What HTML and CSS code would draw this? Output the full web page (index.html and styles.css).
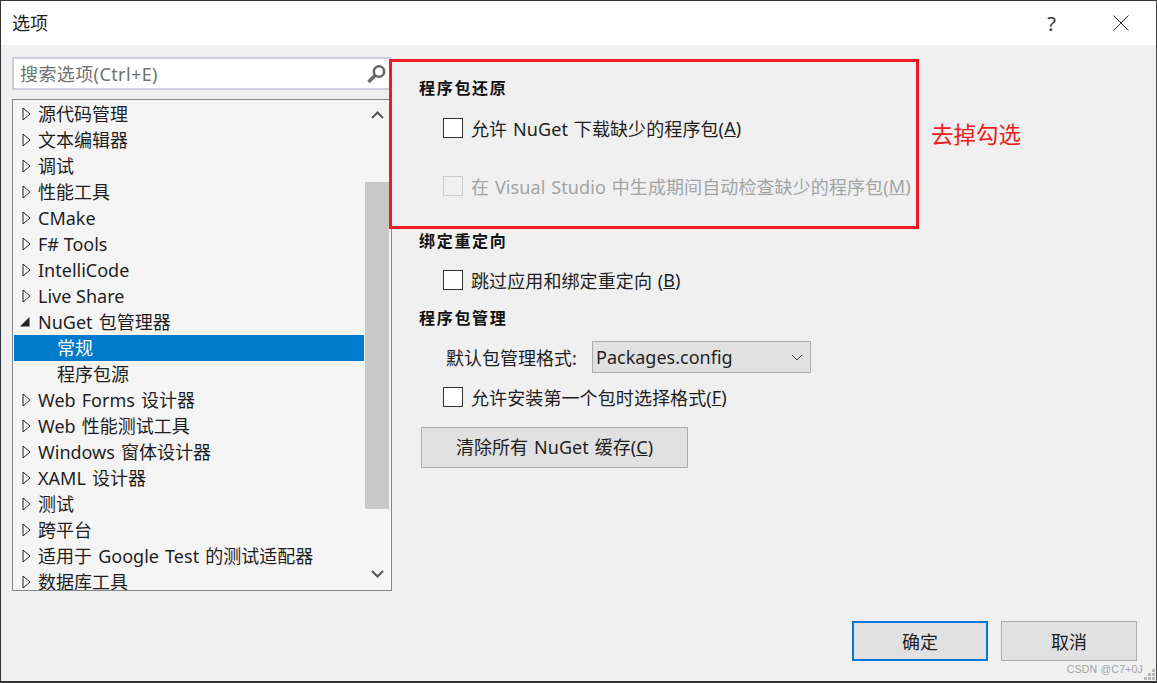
FILE: index.html
```html
<!DOCTYPE html>
<html lang="zh-CN">

<head>
    <meta charset="UTF-8">
    <meta name="viewport" content="width=device-width, initial-scale=1.0">
    <title>选项</title>
    <link rel="stylesheet" href="styles.css">
</head>

<body>
    <div class="dialog">
        <div class="titlebar">
            <span class="title">选项</span>
            <span class="help">?</span>
            <svg class="close" width="16" height="16" viewBox="0 0 16 16">
                <path d="M0.5 0.5L15.5 15.5M15.5 0.5L0.5 15.5" stroke="#222" stroke-width="1" fill="none" />
            </svg>
        </div>

        <div class="content">
            <div class="left">
                <div class="search">
                    <span class="search-text">搜索选项(Ctrl+E)</span>
                    <svg class="search-icon" width="21" height="20" viewBox="0 0 21 20">
                        <circle cx="13" cy="7.5" r="5.2" stroke="#6a6a6a" stroke-width="2.6" fill="none" />
                        <path d="M9 11.5L2.5 18" stroke="#6a6a6a" stroke-width="3.6" fill="none" />
                    </svg>
                </div>

                <div class="tree">
                    <div class="tree-list">
                        <div class="row"><svg class="arrow" width="9" height="14" viewBox="0 0 9 14"><path d="M1 1L8 7L1 13Z" fill="none" stroke="#222" /></svg>源代码管理</div>
                        <div class="row"><svg class="arrow" width="9" height="14" viewBox="0 0 9 14"><path d="M1 1L8 7L1 13Z" fill="none" stroke="#222" /></svg>文本编辑器</div>
                        <div class="row"><svg class="arrow" width="9" height="14" viewBox="0 0 9 14"><path d="M1 1L8 7L1 13Z" fill="none" stroke="#222" /></svg>调试</div>
                        <div class="row"><svg class="arrow" width="9" height="14" viewBox="0 0 9 14"><path d="M1 1L8 7L1 13Z" fill="none" stroke="#222" /></svg>性能工具</div>
                        <div class="row"><svg class="arrow" width="9" height="14" viewBox="0 0 9 14"><path d="M1 1L8 7L1 13Z" fill="none" stroke="#222" /></svg>CMake</div>
                        <div class="row"><svg class="arrow" width="9" height="14" viewBox="0 0 9 14"><path d="M1 1L8 7L1 13Z" fill="none" stroke="#222" /></svg>F# Tools</div>
                        <div class="row"><svg class="arrow" width="9" height="14" viewBox="0 0 9 14"><path d="M1 1L8 7L1 13Z" fill="none" stroke="#222" /></svg>IntelliCode</div>
                        <div class="row"><svg class="arrow" width="9" height="14" viewBox="0 0 9 14"><path d="M1 1L8 7L1 13Z" fill="none" stroke="#222" /></svg>Live Share</div>
                        <div class="row mixed"><svg class="arrow open" width="10" height="14" viewBox="0 0 10 14"><path d="M0 11.5L9.5 11.5L9.5 2Z" fill="#222" /></svg>NuGet 包管理器</div>
                        <div class="row child selected">常规</div>
                        <div class="row child">程序包源</div>
                        <div class="row mixed"><svg class="arrow" width="9" height="14" viewBox="0 0 9 14"><path d="M1 1L8 7L1 13Z" fill="none" stroke="#222" /></svg>Web Forms 设计器</div>
                        <div class="row mixed"><svg class="arrow" width="9" height="14" viewBox="0 0 9 14"><path d="M1 1L8 7L1 13Z" fill="none" stroke="#222" /></svg>Web 性能测试工具</div>
                        <div class="row mixed"><svg class="arrow" width="9" height="14" viewBox="0 0 9 14"><path d="M1 1L8 7L1 13Z" fill="none" stroke="#222" /></svg>Windows 窗体设计器</div>
                        <div class="row mixed"><svg class="arrow" width="9" height="14" viewBox="0 0 9 14"><path d="M1 1L8 7L1 13Z" fill="none" stroke="#222" /></svg>XAML 设计器</div>
                        <div class="row"><svg class="arrow" width="9" height="14" viewBox="0 0 9 14"><path d="M1 1L8 7L1 13Z" fill="none" stroke="#222" /></svg>测试</div>
                        <div class="row"><svg class="arrow" width="9" height="14" viewBox="0 0 9 14"><path d="M1 1L8 7L1 13Z" fill="none" stroke="#222" /></svg>跨平台</div>
                        <div class="row mixed"><svg class="arrow" width="9" height="14" viewBox="0 0 9 14"><path d="M1 1L8 7L1 13Z" fill="none" stroke="#222" /></svg>适用于 Google Test 的测试适配器</div>
                        <div class="row"><svg class="arrow" width="9" height="14" viewBox="0 0 9 14"><path d="M1 1L8 7L1 13Z" fill="none" stroke="#222" /></svg>数据库工具</div>
                    </div>
                    <div class="scrollbar">
                        <svg class="scroll-up" width="13" height="8" viewBox="0 0 13 8"><path d="M1 7L6.5 1.5L12 7" stroke="#555" stroke-width="2" fill="none" /></svg>
                        <div class="thumb"></div>
                        <svg class="scroll-down" width="13" height="8" viewBox="0 0 13 8"><path d="M1 1L6.5 6.5L12 1" stroke="#555" stroke-width="2" fill="none" /></svg>
                    </div>
                </div>
            </div>

            <div class="right">
                <h3 class="heading first">程序包还原</h3>
                <div class="check check-a"><span class="box"></span>允许 NuGet 下载缺少的程序包(<u>A</u>)</div>
                <div class="check check-m disabled"><span class="box"></span>在 Visual Studio 中生成期间自动检查缺少的程序包(<u>M</u>)</div>

                <h3 class="heading second">绑定重定向</h3>
                <div class="check check-b"><span class="box"></span>跳过应用和绑定重定向 (<u>B</u>)</div>

                <h3 class="heading third">程序包管理</h3>
                <div class="format-row">
                    <label>默认包管理格式:</label>
                    <div class="select">
                        <span>Packages.config</span>
                        <svg width="12" height="7" viewBox="0 0 12 7"><path d="M1 1L6 6L11 1" stroke="#444" fill="none" /></svg>
                    </div>
                </div>
                <div class="check check-f"><span class="box"></span>允许安装第一个包时选择格式(<u>F</u>)</div>
                <button class="clear-btn" type="button">清除所有 NuGet 缓存(<u>C</u>)</button>
            </div>
        </div>

        <div class="footer">
            <button class="btn default" type="button">确定</button>
            <button class="btn" type="button">取消</button>
        </div>

        <!-- annotation drawn over the screenshot -->
        <div class="red-box"></div>
        <div class="red-note">去掉勾选</div>
        <div class="watermark">CSDN @C7+0J</div>
        <svg class="grip" width="12" height="12" viewBox="0 0 12 12">
            <path d="M8 0h3v3H8zM4 4h3v3H4zM8 4h3v3H8zM0 8h3v3H0zM4 8h3v3H4zM8 8h3v3H8z" fill="#b8b8b8" />
        </svg>
    </div>
</body>

</html>
```

FILE: styles.css
```css
* {
    box-sizing: border-box;
}

html,
body {
    margin: 0;
    height: 100%;
    overflow: hidden;
}

body {
    font-family: "Noto Sans", "Noto Sans CJK SC", sans-serif;
    font-size: 18px;
    color: #1e1e1e;
}

.dialog {
    position: relative;
    width: 1157px;
    height: 683px;
    display: flex;
    flex-direction: column;
    background: #f0f0f0;
    border: 1px solid #333;
    border-bottom-width: 2px;
    border-right-color: #444;
}

.titlebar {
    height: 44px;
    flex: none;
    display: flex;
    align-items: center;
    background: #fff;
    padding-left: 11px;
}

.title {
    flex: 1;
    line-height: 44px;
}

.help {
    margin-right: 57px;
    font-size: 20px;
    color: #333;
}

.close {
    margin-right: 27px;
}

.content {
    flex: 1;
    display: flex;
    padding: 12px 0 0 11px;
    min-height: 0;
}

.left {
    width: 380px;
    flex: none;
}

.search {
    height: 33px;
    display: flex;
    align-items: center;
    justify-content: space-between;
    background: #fff;
    border: 2px solid #cccedb;
    padding: 0 3px 0 6px;
}

.search-text {
    color: #717171;
    line-height: 29px;
    padding-top: 2px;
    letter-spacing: 0.4px;
}

.tree {
    margin-top: 9px;
    height: 492px;
    display: flex;
    background: #f5f5f5;
    border: 1px solid #828790;
    overflow: hidden;
}

.tree-list {
    flex: 1;
    padding: 1px 0 0 1px;
    overflow: hidden;
}

.row {
    height: 26px;
    line-height: 26px;
    display: flex;
    align-items: center;
    padding-left: 8px;
    white-space: pre;
}

.row.mixed {
    word-spacing: 1.5px;
}

.arrow {
    flex: none;
    margin-right: 7px;
}

.arrow.open {
    margin-left: -2px;
    margin-right: 8px;
}

.row.child {
    padding-left: 43px;
}

.row.selected {
    background: #007acc;
    color: #fff;
}

.scrollbar {
    width: 27px;
    flex: none;
    display: flex;
    flex-direction: column;
    align-items: center;
}

.scroll-up {
    margin-top: 11px;
}

.thumb {
    width: 24px;
    height: 327px;
    margin: 63px 2px 0 1px;
    background: #c8c8c8;
}

.scroll-down {
    margin-top: 61px;
}

.right {
    flex: 1;
    padding-left: 27px;
}

.heading {
    margin: 0;
    font-size: 16px;
    font-weight: 700;
    letter-spacing: 1.7px;
    line-height: 22px;
    color: #111;
}

.heading.first {
    margin-top: 20px;
}

.heading.second {
    margin-top: 32px;
}

.heading.third {
    margin-top: 15px;
}

.check {
    display: flex;
    align-items: center;
    height: 24px;
    padding-left: 24px;
    white-space: pre;
    word-spacing: 1px;
    letter-spacing: 0.1px;
}

.check-a {
    margin-top: 17px;
}

.check-m {
    margin-top: 34px;
}

.check-b {
    margin-top: 16px;
}

.check-f {
    margin-top: 12px;
}

.box {
    width: 20px;
    height: 20px;
    flex: none;
    margin-right: 8px;
    background: #fff;
    border: 1px solid #333;
}

.disabled {
    color: #a2a4a5;
}

.disabled .box {
    background: #f0f0f0;
    border-color: #ccc;
}

.format-row {
    display: flex;
    align-items: center;
    margin-top: 12px;
    padding-left: 27px;
}

.format-row label {
    width: 146px;
}

.select {
    width: 219px;
    height: 32px;
    display: flex;
    align-items: center;
    justify-content: space-between;
    padding: 0 7px 0 3px;
    background: #e1e1e1;
    border: 1px solid #adadad;
}

.clear-btn {
    display: block;
    width: 267px;
    height: 41px;
    margin: 18px 0 0 2px;
    padding: 0 0 3px;
    font: inherit;
    word-spacing: 1.5px;
    color: inherit;
    background: #e1e1e1;
    border: 1px solid #adadad;
}

.footer {
    flex: none;
    display: flex;
    justify-content: flex-end;
    gap: 13px;
    padding: 0 19px 20px 0;
}

.btn {
    width: 136px;
    height: 40px;
    padding: 0;
    font: inherit;
    color: inherit;
    background: #e1e1e1;
    border: 1px solid #adadad;
}

.btn.default {
    border: 2px solid #0078d7;
}

.red-box {
    position: absolute;
    left: 388px;
    top: 58px;
    width: 530px;
    height: 170px;
    border: 3px solid #ed1c24;
}

.red-note {
    position: absolute;
    left: 930px;
    top: 118px;
    font-size: 22.5px;
    line-height: 32px;
    color: #ed1c24;
}

.watermark {
    position: absolute;
    right: 13px;
    bottom: 5px;
    font-family: "Liberation Sans", sans-serif;
    font-size: 10.5px;
    line-height: 14px;
    letter-spacing: 0.2px;
    color: #a4a4a4;
}

.grip {
    position: absolute;
    right: 0;
    bottom: 0;
}
```
